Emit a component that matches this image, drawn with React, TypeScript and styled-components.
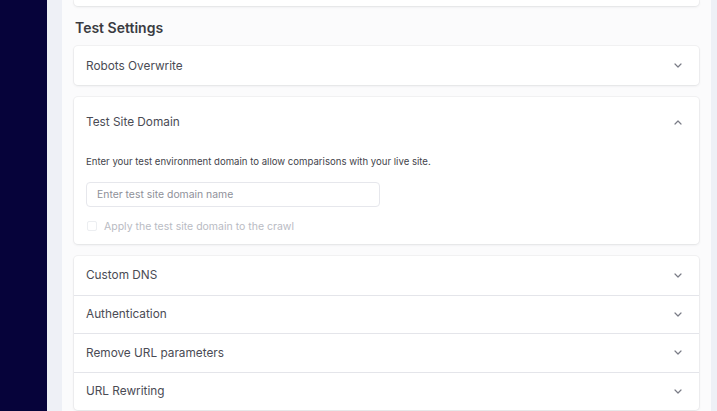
import React from "react";
import styled, { createGlobalStyle } from "styled-components";

const Global = createGlobalStyle`
  html, body { margin: 0; padding: 0; height: 411px; overflow: hidden; }
  body { font-family: Inter, "Noto Sans", Arial, sans-serif; -webkit-font-smoothing: antialiased; }
  * { box-sizing: border-box; }
`;

const Shell = styled.div`
  display: flex;
  height: 411px;
  width: 717px;
`;

const Sidebar = styled.div`
  width: 47px;
  flex: none;
  background: #06033a;
`;

const Main = styled.div`
  flex: 1;
  display: flex;
  background: #eef0f6;
  padding: 0 6px 0 15px;
  min-width: 0;
`;

const Panel = styled.div`
  flex: 1;
  background: #fbfbfc;
  padding: 0 12px;
  display: flex;
  flex-direction: column;
  overflow: hidden;
`;

const Card = styled.div`
  background: #ffffff;
  border-radius: 4px;
  flex: none;
  box-shadow: 0 0 0 1px rgba(15, 20, 40, 0.035), 0 1px 3px rgba(15, 20, 40, 0.08);
`;

const TopStub = styled(Card)`
  height: 6px;
  border-top-left-radius: 0;
  border-top-right-radius: 0;
`;

const Heading = styled.h2`
  margin: 14px 0 10px 1px;
  font-size: 14px;
  line-height: 16px;
  font-weight: 600;
  color: #3a3b42;
`;

const RowHead = styled.div<{ $tall?: boolean }>`
  height: ${(p) => (p.$tall ? "50px" : "39px")};
  display: flex;
  align-items: center;
  justify-content: space-between;
  padding: 0 17px 0 12px;
  font-size: 11.8px;
  color: #4a4b54;
`;

const Chevron = styled.svg`
  width: 8px;
  height: 5px;
  flex: none;
`;

const Expanded = styled(Card)`
  margin-top: 12px;
`;

const Body = styled.div`
  padding: 9px 12px 11px;
  display: flex;
  flex-direction: column;
`;

const Desc = styled.p`
  margin: 0;
  font-size: 9.6px;
  line-height: 12px;
  color: #43444c;
`;

const Input = styled.input`
  margin-top: 14px;
  width: 294px;
  height: 25px;
  border: 1px solid #e6e7ec;
  border-radius: 4px;
  padding: 0 10px;
  font-family: inherit;
  font-size: 10.4px;
  color: #333;
  outline: none;
  &::placeholder { color: #8e9099; }
`;

const CheckRow = styled.label`
  margin-top: 12px;
  height: 14px;
  display: flex;
  align-items: center;
  gap: 7px;
  font-size: 10.5px;
  color: #b9bbc3;
  padding-left: 1px;
`;

const Box = styled.span`
  width: 10px;
  height: 10px;
  border: 1px solid #eceef1;
  border-radius: 2px;
  background: #fff;
`;

const Group = styled(Card)`
  margin-top: 12px;
  overflow: hidden;
`;

const GroupRow = styled(RowHead)`
  height: 38.5px;
  & + & { border-top: 1.5px solid #e4e5ea; }
`;

const Down = () => (
  <Chevron viewBox="0 0 8 5">
    <path d="M1 1l3 3 3-3" fill="none" stroke="#7a7c86" strokeWidth="1.2" strokeLinecap="round" strokeLinejoin="round" />
  </Chevron>
);
const Up = () => (
  <Chevron viewBox="0 0 8 5">
    <path d="M1 4l3-3 3 3" fill="none" stroke="#7a7c86" strokeWidth="1.2" strokeLinecap="round" strokeLinejoin="round" />
  </Chevron>
);

const groupItems = ["Custom DNS", "Authentication", "Remove URL parameters", "URL Rewriting"];

export default function App() {
  return (
    <>
      <Global />
      <Shell>
        <Sidebar />
        <Main>
          <Panel>
            <TopStub />
            <Heading>Test Settings</Heading>
            <Card>
              <RowHead>
                <span>Robots Overwrite</span>
                <Down />
              </RowHead>
            </Card>
            <Expanded>
              <RowHead $tall>
                <span>Test Site Domain</span>
                <Up />
              </RowHead>
              <Body>
                <Desc>Enter your test environment domain to allow comparisons with your live site.</Desc>
                <Input placeholder="Enter test site domain name" />
                <CheckRow>
                  <Box />
                  <span>Apply the test site domain to the crawl</span>
                </CheckRow>
              </Body>
            </Expanded>
            <Group>
              {groupItems.map((t) => (
                <GroupRow key={t}>
                  <span>{t}</span>
                  <Down />
                </GroupRow>
              ))}
            </Group>
          </Panel>
        </Main>
      </Shell>
    </>
  );
}
